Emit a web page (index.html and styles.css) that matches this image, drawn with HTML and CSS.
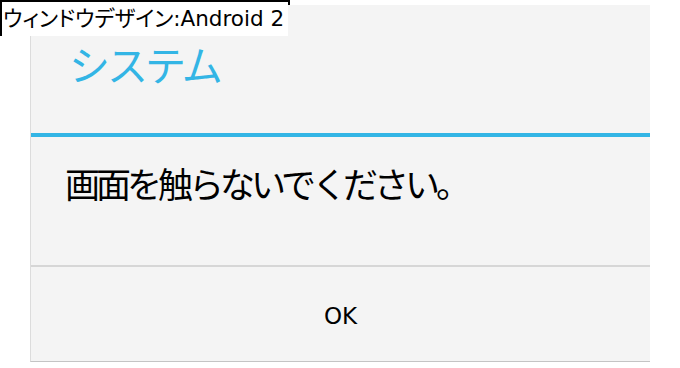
FILE: index.html
```html
<!DOCTYPE html>
<html lang="ja">
<head>
<meta charset="utf-8">
<title>Android 2</title>
<link rel="stylesheet" href="styles.css">
</head>
<body>
<div class="page">
  <div class="label-frame"></div>
  <div class="dialog">
    <div class="title">システム</div>
    <div class="accent"></div>
    <div class="message">画面を触らないでください。</div>
    <div class="divider"></div>
    <div class="button">OK</div>
  </div>
  <div class="label-text">ウィンドウデザイン:Android 2</div>
</div>
</body>
</html>
```
FILE: styles.css
```css
html, body {
  margin: 0;
  padding: 0;
  background: #ffffff;
}
body {
  width: 680px;
  height: 368px;
  overflow: hidden;
  font-family: "Noto Sans CJK JP", "Noto Sans", sans-serif;
}
.page {
  position: relative;
  width: 680px;
  height: 368px;
  padding-top: 5px;
  padding-left: 30px;
  box-sizing: border-box;
}
.label-frame {
  position: absolute;
  left: 0;
  top: 0;
  width: 290px;
  height: 36px;
  box-sizing: border-box;
  border: 2px solid #000;
  z-index: 0;
}
.label-text {
  position: absolute;
  left: 2px;
  top: 2px;
  width: 285px;
  height: 34px;
  background: #ffffff;
  color: #000;
  font-family: "DejaVu Sans", "Noto Sans CJK JP", sans-serif;
  font-feature-settings: "palt";
  font-size: 21.5px;
  line-height: 34px;
  padding-left: 1px;
  white-space: nowrap;
  overflow: hidden;
  z-index: 2;
}
.dialog {
  position: relative;
  z-index: 1;
  width: 620px;
  height: 357px;
  box-sizing: border-box;
  background: #f4f4f4;
  border-left: 1px solid #dcdcdc;
  border-bottom: 1px solid #c4c4c4;
  display: flex;
  flex-direction: column;
}
.title {
  height: 128px;
  display: flex;
  align-items: center;
  padding-left: 38px;
  color: #33b5e5;
  font-size: 41px;
  letter-spacing: -3px;
  line-height: 1;
  padding-bottom: 12px;
  box-sizing: border-box;
}
.accent {
  height: 4px;
  background: #33b5e5;
}
.message {
  height: 128px;
  box-sizing: border-box;
  padding-left: 34px;
  padding-top: 26px;
  font-size: 35px;
  line-height: 40px;
  color: #000;
  letter-spacing: -4px;
  white-space: nowrap;
}
.divider {
  height: 2px;
  background: #d6d6d6;
}
.button {
  flex: 1;
  display: flex;
  align-items: center;
  justify-content: center;
  padding-top: 4px;
  font-family: "DejaVu Sans", "Noto Sans CJK JP", sans-serif;
  font-size: 23px;
  color: #000;
}
```
